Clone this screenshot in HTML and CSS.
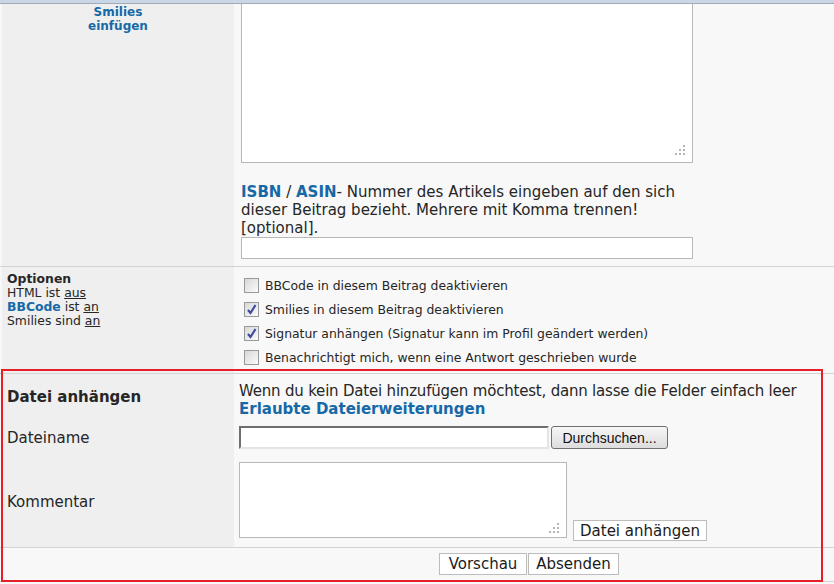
FILE: index.html
```html
<!DOCTYPE html>
<html lang="de">
<head>
<meta charset="utf-8">
<title>Beitrag schreiben</title>
<link rel="stylesheet" href="styles.css">
</head>
<body>
<div class="topbar"></div>

<div class="row row-msg">
  <div class="lc lc-smilies"><a class="lnk">Smilies<br>einfügen</a></div>
  <div class="rc rc-msg">
    <div class="ta-wrap">
      <textarea class="ta ta-big"></textarea>
      <svg class="grip" width="10" height="10" viewBox="0 0 10 10"><rect x="8" y="0" width="2" height="2"/><rect x="4" y="4" width="2" height="2"/><rect x="8" y="4" width="2" height="2"/><rect x="0" y="8" width="2" height="2"/><rect x="4" y="8" width="2" height="2"/><rect x="8" y="8" width="2" height="2"/></svg>
    </div>
    <p class="isbn"><a class="lnk">ISBN</a> / <a class="lnk">ASIN</a>- Nummer des Artikels eingeben auf den sich dieser Beitrag bezieht. Mehrere mit Komma trennen! [optional].</p>
    <input class="txt isbn-input" type="text">
  </div>
</div>

<div class="row row-opt">
  <div class="lc lc-opt">
    <b>Optionen</b><br>
    HTML ist <u>aus</u><br>
    <a class="lnk">BBCode</a> ist <u>an</u><br>
    Smilies sind <u>an</u>
  </div>
  <div class="rc rc-opt">
    <div class="cbrow"><span class="cb"></span>BBCode in diesem Beitrag deaktivieren</div>
    <div class="cbrow"><span class="cb"><svg width="13" height="13" viewBox="0 0 13 13"><path d="M3 7 L5.5 10 L10.5 2" fill="none" stroke="#3b4b9e" stroke-width="2.2"/></svg></span>Smilies in diesem Beitrag deaktivieren</div>
    <div class="cbrow"><span class="cb"><svg width="13" height="13" viewBox="0 0 13 13"><path d="M3 7 L5.5 10 L10.5 2" fill="none" stroke="#3b4b9e" stroke-width="2.2"/></svg></span>Signatur anhängen (Signatur kann im Profil geändert werden)</div>
    <div class="cbrow"><span class="cb"></span>Benachrichtigt mich, wenn eine Antwort geschrieben wurde</div>
  </div>
</div>

<div class="row row-att1">
  <div class="lc lc-att"><b>Datei anhängen</b></div>
  <div class="rc rc-att1"><span class="att-note">Wenn du kein Datei hinzufügen möchtest, dann lasse die Felder einfach leer</span><br><a class="lnk">Erlaubte Dateierweiterungen</a></div>
</div>

<div class="row row-att2">
  <div class="lc lc-att">Dateiname</div>
  <div class="rc rc-att2"><input class="file-txt" type="text"><button class="browse" type="button">Durchsuchen...</button></div>
</div>

<div class="row row-att3">
  <div class="lc lc-att">Kommentar</div>
  <div class="rc rc-att3">
    <div class="ta-wrap">
      <textarea class="ta ta-comment"></textarea>
      <svg class="grip" width="10" height="10" viewBox="0 0 10 10"><rect x="8" y="0" width="2" height="2"/><rect x="4" y="4" width="2" height="2"/><rect x="8" y="4" width="2" height="2"/><rect x="0" y="8" width="2" height="2"/><rect x="4" y="8" width="2" height="2"/><rect x="8" y="8" width="2" height="2"/></svg>
    </div>
    <button class="btn btn-attach" type="button">Datei anhängen</button>
  </div>
</div>

<div class="row row-submit">
  <button class="btn" type="button">Vorschau</button><button class="btn" type="button">Absenden</button>
</div>

<div class="redbox"></div>
</body>
</html>
```

FILE: styles.css
```css
html, body {
  margin: 0;
  padding: 0;
}
body {
  background: #f8f8f8;
  color: #262626;
  font-family: "DejaVu Sans", Verdana, sans-serif;
  font-size: 15px;
  width: 834px;
  height: 584px;
  overflow: hidden;
  position: relative;
}
.topbar {
  height: 3px;
  background: #c9d6e8;
  border-bottom: 1px solid #a4abb6;
}
.row {
  display: flex;
  border-bottom: 1px solid #d3d3d3;
}
.lc {
  width: 232px;
  margin-left: 2px;
  background: #efefef;
  flex: none;
  box-sizing: border-box;
}
.rc {
  flex: 1;
  box-sizing: border-box;
}
.lnk {
  color: #1669a6;
  font-weight: bold;
  text-decoration: none;
}

/* message row */
.row-msg { height: 262px; }
.lc-smilies {
  text-align: center;
  font-size: 12px;
  line-height: 14px;
  padding-top: 1px;
}
.rc-msg { padding-left: 7px; }
.ta-wrap {
  position: relative;
  display: block;
  width: max-content;
  flex: none;
}
.ta {
  display: block;
  margin: 0;
  padding: 0;
  background: #fff;
  border: 1px solid #b8b8b8;
  box-sizing: border-box;
  resize: none;
}
.ta-big {
  width: 452px;
  height: 159px;
  border-top: 0;
}
.grip {
  position: absolute;
  right: 8px;
  bottom: 8px;
  fill: #b4b4b4;
}
.isbn {
  margin: 20px 0 0;
  width: 452px;
  font-size: 15px;
  line-height: 18px;
}
.txt {
  display: block;
  margin: 0;
  padding: 0;
  border: 1px solid #b8b8b8;
  background: #fff;
  box-sizing: border-box;
}
.isbn-input {
  width: 452px;
  height: 22px;
}

/* options row */
.row-opt { height: 106px; }
.lc-opt {
  font-size: 12.4px;
  line-height: 14px;
  padding: 5px 5px;
}
.lc-opt u { text-decoration: underline; }
.rc-opt {
  padding: 6px 0 0 10px;
  font-size: 12.4px;
}
.cbrow {
  height: 24px;
  display: flex;
  align-items: center;
}
.cb {
  width: 13px;
  height: 13px;
  border: 1px solid #9a9a9a;
  background: linear-gradient(135deg, #d8d8d8, #fafafa);
  margin-right: 6px;
  flex: none;
  display: flex;
}

/* attachment rows */
.row-att1, .row-att2 { border-bottom: 0; }
.lc-att {
  display: flex;
  align-items: center;
  padding-left: 5px;
}
.row-att1 { height: 46px; }
.rc-att1 {
  padding: 8px 5px 0;
  line-height: 18px;
  white-space: nowrap;
}
.att-note { letter-spacing: -0.2px; }
.row-att2 { height: 36px; }
.rc-att2 {
  padding: 6px 5px 0;
  display: flex;
  align-items: flex-start;
}
.file-txt {
  width: 310px;
  height: 23px;
  margin: 0;
  padding: 0;
  box-sizing: border-box;
  background: #fff;
  border: 2px solid;
  border-color: #6e6e6e #e4e4e4 #e4e4e4 #6e6e6e;
}
.browse {
  margin: 0 0 0 2px;
  width: 117px;
  height: 23px;
  padding: 0;
  font-family: "Liberation Sans", Arial, sans-serif;
  font-size: 14px;
  color: #111;
  border: 1px solid #707070;
  border-radius: 3px;
  background: linear-gradient(#f6f6f6, #dddddd);
}
.row-att3 { height: 91px; }
.rc-att3 {
  padding: 6px 5px 6px;
  display: flex;
  align-items: flex-end;
  height: 91px;
}
.ta-comment {
  width: 328px;
  height: 76px;
  margin-bottom: 3px;
}
.btn {
  margin: 0;
  padding: 0;
  height: 22px;
  background: #fff;
  border: 1px solid #bcbcbc;
  font-family: "DejaVu Sans", Verdana, sans-serif;
  font-size: 15px;
  color: #1a1a1a;
  white-space: nowrap;
}
.btn-attach {
  margin-left: 6px;
  height: 21px;
  width: 134px;
}

/* submit row */
.row-submit {
  padding: 5px 0 6px 439px;
  height: 22px;
  gap: 1px;
}
.row-submit .btn:first-child { width: 88px; }
.row-submit .btn:last-child { width: 91px; }

.redbox {
  position: absolute;
  left: 1px;
  top: 369px;
  width: 822px;
  height: 213px;
  box-sizing: border-box;
  border: 2px solid #e61e28;
}
```
